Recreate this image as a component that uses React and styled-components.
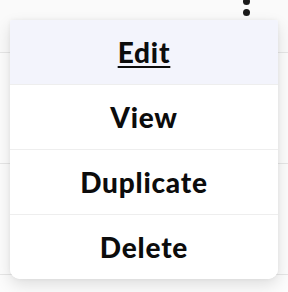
import React from 'react'
import styled, { createGlobalStyle } from 'styled-components'

const Global = createGlobalStyle`
  html, body { margin: 0; padding: 0; background: #fafafa; }
  body { font-family: Lato, "Noto Sans", sans-serif; }
`

const items = ['Edit', 'View', 'Duplicate', 'Delete']

export default function App() {
  return (
    <>
      <Global />
      <Page>
        <Row />
        <Row />
        <Row />
        <Kebab>
          <Dot /><Dot /><Dot />
        </Kebab>
        <Menu>
          {items.map((label, i) => (
            <Item key={label} active={i === 0}>{label}</Item>
          ))}
        </Menu>
      </Page>
    </>
  )
}

const Page = styled.div`
  position: relative;
  width: 288px;
  height: 292px;
  overflow: hidden;
  display: flex;
  flex-direction: column;
  padding-top: 52px;
  box-sizing: border-box;
`

const Row = styled.div`
  height: 110px;
  border-top: 1px solid #e6e6e6;
  background: #fcfcfc;
  flex-shrink: 0;
`

const Kebab = styled.div`
  position: absolute;
  left: 243px;
  top: -13px;
  display: flex;
  flex-direction: column;
  gap: 4px;
`

const Dot = styled.span`
  width: 7px;
  height: 7px;
  border-radius: 50%;
  background: #1a1a1a;
`

const Menu = styled.div`
  position: absolute;
  left: 10px;
  top: 20px;
  width: 268px;
  background: #fff;
  border-radius: 2px 2px 10px 10px;
  box-shadow: 0 6px 16px rgba(0, 0, 0, 0.12), 0 0 4px rgba(0, 0, 0, 0.05);
  overflow: hidden;
`

const Item = styled.div`
  height: 64px;
  display: flex;
  align-items: center;
  justify-content: center;
  font-size: 28px;
  font-weight: 900;
  color: #0c0c0c;
  letter-spacing: 0.8px;
  background: ${p => (p.active ? '#f3f4fc' : '#fff')};
  text-decoration: ${p => (p.active ? 'underline' : 'none')};
  text-decoration-thickness: 2px;
  text-underline-offset: 3px;
  & + & { border-top: 1px solid #eeeeee; }
`
